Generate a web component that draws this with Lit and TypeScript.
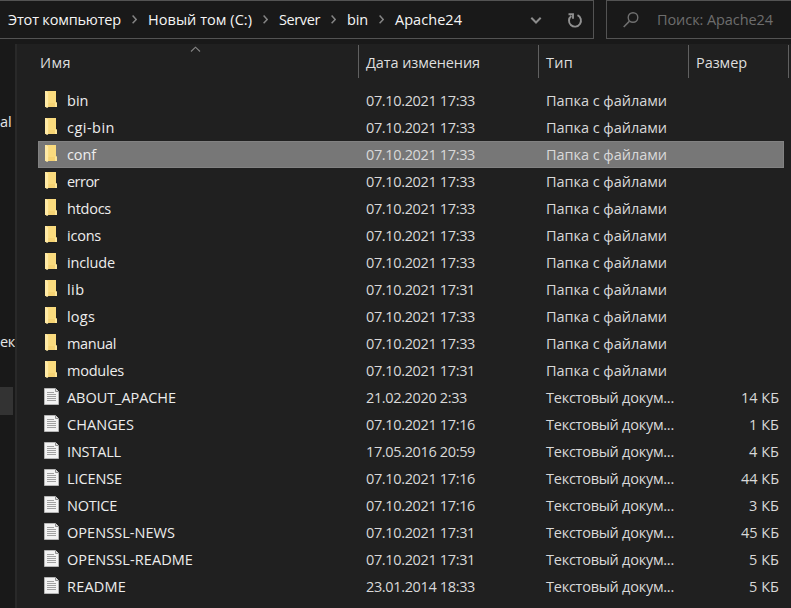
import { LitElement, html, css, svg } from "lit";
import { customElement, property } from "lit/decorators.js";

/** A label whose tracking is adjusted so that its text spans a given width. */
@customElement("fit-text")
class FitText extends LitElement {
  @property() text = "";
  @property({ type: Number }) span = 0;

  static styles = css`
    :host { display: inline-block; white-space: pre; }
  `;

  updated() {
    const el = this.renderRoot.querySelector("span") as HTMLElement;
    el.style.letterSpacing = "0px";
    const natural = el.getBoundingClientRect().width;
    if (this.span && natural) {
      el.style.letterSpacing = `${(this.span - natural) / this.text.length}px`;
    }
  }

  render() {
    return html`<span>${this.text}</span>`;
  }
}

interface Entry {
  name: string;
  span: number;
  date: string;
  size?: string;
  selected?: boolean;
}

const D33 = "07.10.2021 17:33";
const D31 = "07.10.2021 17:31";
const D16 = "07.10.2021 17:16";

const entries: Entry[] = [
  { name: "bin", span: 21.5, date: D33 },
  { name: "cgi-bin", span: 48, date: D33 },
  { name: "conf", span: 29, date: D33, selected: true },
  { name: "error", span: 32, date: D33 },
  { name: "htdocs", span: 44, date: D33 },
  { name: "icons", span: 34, date: D33 },
  { name: "include", span: 48, date: D33 },
  { name: "lib", span: 17.5, date: D31 },
  { name: "logs", span: 28, date: D33 },
  { name: "manual", span: 49, date: D33 },
  { name: "modules", span: 57, date: D31 },
  { name: "ABOUT_APACHE", span: 109, date: "21.02.2020 2:33", size: "14 КБ" },
  { name: "CHANGES", span: 67, date: D16, size: "1 КБ" },
  { name: "INSTALL", span: 54, date: "17.05.2016 20:59", size: "4 КБ" },
  { name: "LICENSE", span: 55, date: D16, size: "44 КБ" },
  { name: "NOTICE", span: 50, date: D16, size: "3 КБ" },
  { name: "OPENSSL-NEWS", span: 108, date: D31, size: "45 КБ" },
  { name: "OPENSSL-README", span: 126, date: D31, size: "5 КБ" },
  { name: "README", span: 59, date: "23.01.2014 18:33", size: "5 КБ" },
];

const crumbs = [
  { text: "Этот компьютер", span: 113 },
  { text: "Новый том (C:)", span: 104 },
  { text: "Server", span: 41 },
  { text: "bin", span: 21 },
  { text: "Apache24", span: 67 },
];

const folder = svg`
  <path d="M1 1h11v11.500h1V17H1z" fill="#f6d373"/>
  <path d="M4 1h8v12H4z" fill="#fadb7e"/>
  <path d="M1 1h1.500l1.700 1.400v14.800L3 18 1 16.600z" fill="#ffeaa6"/>
  <path d="M11 12.500h2V17h-2z" fill="#fce59a"/>`;

const file = svg`
  <path d="M.5 1.500h11l3 3v13H.5z" fill="#f3f3f3" stroke="#b5b5b5"/>
  <path d="M11.500 1.500v3h3" fill="#dcdcdc" stroke="#8f8f8f"/>
  <path d="M3 5.500h7M3 7.500h9M3 9.500h9M3 11.500h9M3 13.500h9" stroke="#979797" stroke-width=".9"/>`;

@customElement("app-root")
class AppRoot extends LitElement {
  static styles = css`
    :host {
      display: flex;
      flex-direction: column;
      box-sizing: border-box;
      width: 791px;
      height: 608px;
      overflow: hidden;
      background: #191919;
      color: #e6e6e6;
      font: 14.5px/20px "Open Sans", "Noto Sans", sans-serif;
    }
    svg { display: block; flex: none; fill: none; }
    .top { display: flex; gap: 12px; height: 39px; flex: none; }
    .address, .search {
      box-sizing: border-box;
      height: 39px;
      border: 1px solid #535353;
      display: flex;
      align-items: center;
    }
    .address { width: 594px; flex: none; border-left: 0; padding: 0 10px 0 8px; color: #f5f5f5; }
    .search { width: 185px; border-right: 0; flex: none; padding-left: 16px; gap: 18px; color: #6d6d6d; }
    .sep { margin: 0 11px 0 11px; }
    .grow { flex: 1; }
    .reload { margin-left: 25px; }
    .main { display: flex; flex: 1; padding-top: 5px; min-height: 0; }
    .side { width: 15px; flex: none; overflow: hidden; white-space: nowrap; }
    .side div { height: 28px; display: flex; align-items: center; }
    .side .first { margin-top: 64px; }
    .side .second { margin-top: 192px; letter-spacing: -0.4px; }
    .side .mark { margin-top: 31px; width: 13px; background: #333333; }
    .list { flex: 1; background: #202020; border-left: 2px solid #292929; min-width: 0; }
    .head, .row { display: grid; grid-template-columns: 321px 180px 150px 1fr; }
    .head { height: 34px; margin-left: 21px; margin-bottom: 9px; color: #dedede; position: relative; grid-template-columns: 321px 180px 150px 100px; }
    .head div { box-sizing: border-box; height: 33px; margin-top: 1px; padding: 8px 0 0 2px; border-right: 1px solid #606060; }
    .head div + div { padding-left: 7px; }
    .sort { position: absolute; left: 152px; top: 2px; }
    .row { box-sizing: border-box; width: 746px; height: 27px; margin-left: 21px; align-items: center; }
    .row.selected { background: #777777; box-shadow: inset 0 0 0 1px #828282; }
    .name { display: flex; align-items: center; padding-left: 6px; color: #ededed; }
    .name svg { margin: 0 8px 3px 0; }
    .cell { padding-left: 7px; color: #d9d9d9; }
    .size { display: flex; justify-content: flex-end; padding-right: 5px; color: #d9d9d9; }
  `;

  row(e: Entry) {
    const kb = e.size;
    return html`<div class="row ${e.selected ? "selected" : ""}">
      <div class="name">
        <svg width="15" height="18">${kb ? file : folder}</svg>
        <fit-text text=${e.name} span=${e.span}></fit-text>
      </div>
      <div class="cell"><fit-text text=${e.date} span=${e.date.length === 16 ? 109 : 101}></fit-text></div>
      <div class="cell"><fit-text text=${kb ? "Текстовый докум..." : "Папка с файлами"} span=${kb ? 128 : 121}></fit-text></div>
      <div class="size">${kb ? html`<fit-text text=${kb} span=${kb.length === 5 ? 38 : 30}></fit-text>` : ""}</div>
    </div>`;
  }

  render() {
    return html`
      <div class="top">
        <div class="address">
          ${crumbs.map((c, i) => html`
            ${i ? html`<svg class="sep" width="5" height="10"><path d="M.6 .6l3.600 3.800L.6 8.200" stroke="#858585" stroke-width="1.500"/></svg>` : ""}
            <fit-text text=${c.text} span=${c.span}></fit-text>`)}
          <span class="grow"></span>
          <svg width="12" height="8"><path d="M1.300 1.800L6 6.500l4.700-4.700" stroke="#8c8c8c" stroke-width="2"/></svg>
          <svg class="reload" width="16" height="18"><path d="M4.300 4.900A6 6 0 1 0 10.500 4.200M1.500 3.300h4.500v4.400" stroke="#909090" stroke-width="1.900"/></svg>
        </div>
        <div class="search">
          <svg width="16" height="17"><circle cx="10" cy="6.500" r="4.800" stroke="#707070" stroke-width="1.400"/><path d="M6.500 10.100L.700 16" stroke="#707070" stroke-width="1.500"/></svg>
          <fit-text text="Поиск: Apache24" span="116"></fit-text>
        </div>
      </div>
      <div class="main">
        <div class="side">
          <div class="first">al</div>
          <div class="second">ек</div>
          <div class="mark"></div>
        </div>
        <div class="list">
          <div class="head">
            <div><fit-text text="Имя" span="31"></fit-text></div>
            <div><fit-text text="Дата изменения" span="114"></fit-text></div>
            <div><fit-text text="Тип" span="27"></fit-text></div>
            <div><fit-text text="Размер" span="51"></fit-text></div>
            <svg class="sort" width="11" height="7"><path d="M1 5.500l4.500-4.300L10 5.500" stroke="#858585" stroke-width="1.100"/></svg>
          </div>
          ${entries.map((e) => this.row(e))}
        </div>
      </div>`;
  }
}
